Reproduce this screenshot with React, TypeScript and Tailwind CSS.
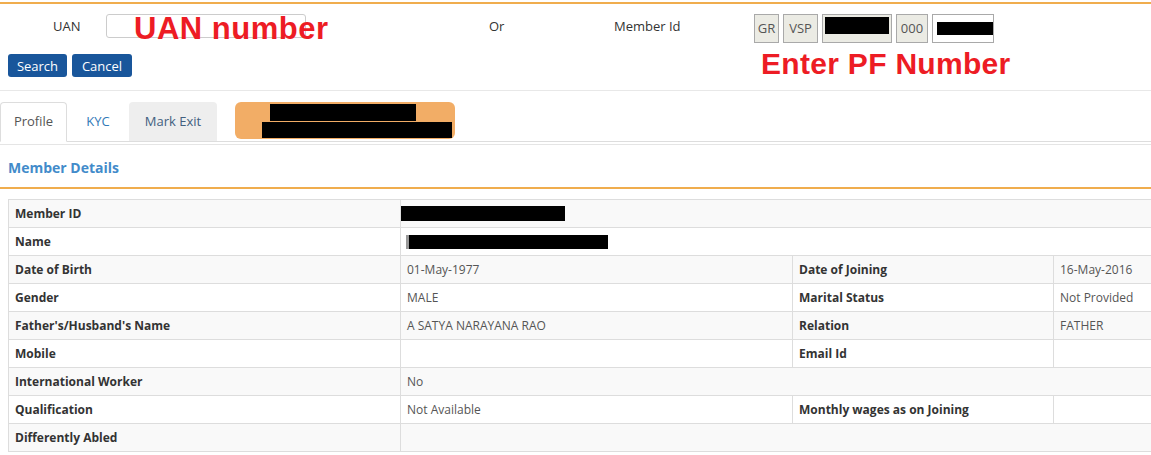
import React from "react";

const font = { fontFamily: '"Open Sans", "Noto Sans", sans-serif' };

function Black({ w, h, className = "" }: { w: string; h: string; className?: string }) {
  return <div className={`bg-black ${w} ${h} ${className}`} />;
}

export default function App() {
  const td = "border border-[#dddddd] h-[28px] px-[6px] py-0 align-middle";
  const lbl = `${td} font-bold text-[#333333]`;
  const val = `${td} text-[#555555]`;
  return (
    <div className="w-full h-[455px] overflow-hidden bg-white text-[12px] text-[#333333]" style={font}>
      <div className="mt-[2px] h-[2px] bg-[#f0ad4e]" />
      {/* search form */}
      <div className="relative">
        <div className="flex items-start mt-[10px] h-[29px]">
          <div className="w-[106px] pl-[53px] text-[13px] leading-[24px] text-[#333]">UAN</div>
          <div className="w-[200px] h-[24px] border border-[#cccccc] rounded-[3px] bg-white" />
          <div className="ml-[183px] w-[125px] text-[13px] leading-[24px] text-[#333]">Or</div>
          <div className="w-[140px] text-[13px] leading-[24px] text-[#333]">Member Id</div>
          <div className="flex gap-[4px] items-stretch h-[29px]">
            <div className="w-[25px] border border-[#a9a9a9] bg-[#ebebe4] flex items-center justify-center text-[13px] text-[#555]">GR</div>
            <div className="w-[35px] border border-[#a9a9a9] bg-[#ebebe4] flex items-center justify-center text-[13px] text-[#555]">VSP</div>
            <div className="w-[70px] border border-[#a9a9a9] bg-[#ebebe4] pt-[2px] pl-[2px]">
              <Black w="w-[64px]" h="h-[17px]" />
            </div>
            <div className="w-[32px] border border-[#a9a9a9] bg-[#ebebe4] flex items-center justify-center text-[13px] text-[#555]">000</div>
            <div className="w-[62px] border border-[#a9a9a9] bg-white pt-[7px] pl-[4px]">
              <Black w="w-[56px]" h="h-[13px]" />
            </div>
          </div>
        </div>
        <div
          className="absolute left-[134px] top-[-1px] text-[31px] font-bold text-[#ed1c24] leading-none tracking-[0.5px]"
          style={{ fontFamily: '"Liberation Sans", Arial, sans-serif' }}
        >
          UAN number
        </div>
        <div
          className="absolute left-[761px] top-[35px] text-[30px] font-bold text-[#ed1c24] leading-none tracking-[0.3px]"
          style={{ fontFamily: '"Liberation Sans", Arial, sans-serif' }}
        >
          Enter PF Number
        </div>
        <div className="flex gap-[5px] mt-[11px] ml-[8px]">
          <button className="w-[59px] h-[23px] rounded-[3px] bg-[#19569b] text-white text-[13px] leading-none pt-[1px]">Search</button>
          <button className="w-[60px] h-[23px] rounded-[3px] bg-[#19569b] text-white text-[13px] leading-none pt-[1px]">Cancel</button>
        </div>
      </div>
      <div className="mt-[13px] h-[1px] bg-[#e8e8e8]" />
      {/* tabs */}
      <div className="mt-[11px] flex items-start border-b border-[#dddddd] h-[40px]">
        <div className="w-[67px] h-[40px] border border-[#dddddd] border-b-white rounded-t-[4px] bg-white flex items-center justify-center text-[13px] text-[#555]">Profile</div>
        <div className="ml-[2px] w-[58px] h-[39px] flex items-center justify-center text-[13px] text-[#337ab7]">KYC</div>
        <div className="ml-[2px] w-[88px] h-[39px] rounded-t-[4px] bg-[#eeeeee] flex items-center justify-center text-[13px] text-[#42607f]">Mark Exit</div>
        <div className="ml-[18px] w-[220px] h-[37px] rounded-[6px] bg-[#f2ad66] flex flex-col items-start pt-[2px]">
          <Black w="w-[146px]" h="h-[17px]" className="ml-[35px]" />
          <Black w="w-[190px]" h="h-[16px]" className="ml-[27px] mt-[1px]" />
        </div>
      </div>
      <div className="mt-[2px] h-[1px] bg-[#e5e5e5]" />
      <div className="pl-[8px] pt-[12px] h-[42px] text-[14px] font-bold text-[#428bca]">Member Details</div>
      <div className="h-[2px] bg-[#f0ad4e]" />
      <div className="pl-[8px] pt-[10px]">
        <table className="table-fixed border-collapse w-[1160px]">
          <colgroup>
            <col className="w-[392px]" />
            <col className="w-[392px]" />
            <col className="w-[261px]" />
            <col className="w-[115px]" />
          </colgroup>
          <tbody>
            <tr className="bg-[#f9f9f9]">
              <td className={lbl}>Member ID</td>
              <td className={`${td} pl-0`} colSpan={3}>
                <Black w="w-[164px]" h="h-[15px]" />
              </td>
            </tr>
            <tr className="bg-white">
              <td className={lbl}>Name</td>
              <td className={`${td} pl-[5px]`} colSpan={3}>
                <div className="flex items-center">
                  <div className="w-[3px] h-[14px] bg-[#999]" />
                  <Black w="w-[199px]" h="h-[14px]" />
                </div>
              </td>
            </tr>
            <tr className="bg-[#f9f9f9]">
              <td className={lbl}>Date of Birth</td>
              <td className={val}>01-May-1977</td>
              <td className={lbl}>Date of Joining</td>
              <td className={val}>16-May-2016</td>
            </tr>
            <tr className="bg-white">
              <td className={lbl}>Gender</td>
              <td className={val}>MALE</td>
              <td className={lbl}>Marital Status</td>
              <td className={val}>Not Provided</td>
            </tr>
            <tr className="bg-[#f9f9f9]">
              <td className={lbl}>Father's/Husband's Name</td>
              <td className={val}>A SATYA NARAYANA RAO</td>
              <td className={lbl}>Relation</td>
              <td className={val}>FATHER</td>
            </tr>
            <tr className="bg-white">
              <td className={lbl}>Mobile</td>
              <td className={val}></td>
              <td className={lbl}>Email Id</td>
              <td className={val}></td>
            </tr>
            <tr className="bg-[#f9f9f9]">
              <td className={lbl}>International Worker</td>
              <td className={val} colSpan={3}>No</td>
            </tr>
            <tr className="bg-white">
              <td className={lbl}>Qualification</td>
              <td className={val}>Not Available</td>
              <td className={lbl}>Monthly wages as on Joining</td>
              <td className={val}></td>
            </tr>
            <tr className="bg-[#f9f9f9]">
              <td className={lbl}>Differently Abled</td>
              <td className={val} colSpan={3}></td>
            </tr>
          </tbody>
        </table>
      </div>
    </div>
  );
}
